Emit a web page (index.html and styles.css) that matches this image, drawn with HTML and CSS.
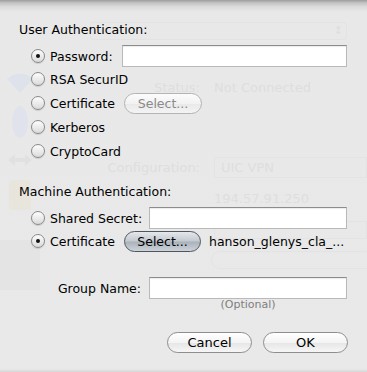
FILE: index.html
```html
<!DOCTYPE html>
<html lang="en">
<head>
  <meta charset="UTF-8" />
  <title>Authentication Settings</title>
  <link rel="stylesheet" href="styles.css">
</head>
<body>

  <!-- network pane behind the sheet, seen faded -->
  <div class="backdrop">
    <div class="ghost-side">
      <svg class="g-wifi" width="30" height="22" viewBox="0 0 30 22">
        <path d="M15 21 L2 7 A19 19 0 0 1 28 7 Z" fill="#dde2eb"/>
      </svg>
      <div class="g-bt"></div>
      <svg class="g-arrows" width="30" height="20" viewBox="0 0 30 20">
        <path d="M3 10 L10 4 L10 8 L20 8 L20 4 L27 10 L20 16 L20 12 L10 12 L10 16 Z" fill="#e1e1e1"/>
      </svg>
      <div class="g-lock"></div>
      <div class="g-vpn"></div>
    </div>
    <div class="ghost-main">
      <div class="g-popup"><span class="g-updown">&#8597;</span></div>
      <div class="g-row g-status"><span class="g-label">Status:</span><span>Not Connected</span></div>
      <div class="g-row g-config"><span class="g-label">Configuration:</span><span class="g-field">UIC VPN</span></div>
      <div class="g-row g-server"><span class="g-label"></span><span>194.57.91.250</span></div>
      <div class="g-row g-account"><span class="g-label"></span><span class="g-field"></span></div>
      <div class="g-authbtn"></div>
    </div>
  </div>

  <div class="sheet">
    <div class="title">User Authentication:</div>

    <div class="options">
      <div class="row first">
        <label class="choice w-pass"><span class="radio on"></span>Password:</label>
        <input class="field" type="password">
      </div>
      <div class="row">
        <label class="choice"><span class="radio"></span>RSA SecurID</label>
      </div>
      <div class="row">
        <label class="choice w-cert"><span class="radio"></span>Certificate</label>
        <button class="pill select disabled">Select...</button>
      </div>
      <div class="row">
        <label class="choice"><span class="radio"></span>Kerberos</label>
      </div>
      <div class="row">
        <label class="choice"><span class="radio"></span>CryptoCard</label>
      </div>
    </div>

    <div class="title second">Machine Authentication:</div>

    <div class="options">
      <div class="row first">
        <label class="choice w-secret"><span class="radio"></span>Shared Secret:</label>
        <input class="field" type="password">
      </div>
      <div class="row">
        <label class="choice w-cert"><span class="radio on"></span>Certificate</label>
        <button class="pill select active">Select...</button>
        <span class="certname">hanson_glenys_cla_...</span>
      </div>
    </div>

    <div class="group">
      <label class="group-label">Group Name:</label>
      <input class="field" type="text">
    </div>
    <div class="hint">(Optional)</div>

    <div class="actions">
      <button class="pill action">Cancel</button>
      <button class="pill action">OK</button>
    </div>
  </div>

</body>
</html>
```

FILE: styles.css
```css
* { margin: 0; padding: 0; box-sizing: border-box; }

body {
  width: 367px;
  height: 372px;
  overflow: hidden;
  position: relative;
  font-family: "Lucida Grande", "DejaVu Sans", sans-serif;
  font-size: 12.5px;
  color: #000;
  background: linear-gradient(to bottom, #9c9c9c 0, #c4c4c4 3px, #dcdcdc 7px, #e8e8e8 12px, #e9e9e9 369px, #d6d6d6 372px);
}

/* faded window behind */
.backdrop {
  position: absolute;
  inset: 0;
  display: flex;
  color: #dedede;
  font-size: 13px;
}

.ghost-side {
  width: 40px;
  display: flex;
  flex-direction: column;
  align-items: center;
  padding-top: 72px;
}

.g-bt {
  width: 16px;
  height: 32px;
  margin-top: 12px;
  border-radius: 50%;
  background: #e0e3ec;
}

.g-arrows { margin-top: 12px; }

.g-lock {
  width: 22px;
  height: 30px;
  margin-top: 10px;
  border-radius: 4px;
  background: #e8e6dc;
}

.g-vpn {
  width: 40px;
  height: 50px;
  margin-top: 30px;
  background: #e4e4e4;
}

.ghost-main {
  flex-grow: 1;
  padding-top: 22px;
}

.g-popup {
  margin-left: 50px;
  width: 257px;
  height: 18px;
  border: 1px solid #e3e3e3;
  border-radius: 3px;
  text-align: right;
  padding-right: 3px;
  font-size: 11px;
  line-height: 16px;
}

.g-row {
  display: flex;
  align-items: center;
  height: 14px;
}

.g-label {
  width: 160px;
  text-align: right;
  margin-right: 14px;
}

.g-status { margin-top: 40px; }
.g-config { margin-top: 63px; height: 21px; }
.g-server { margin-top: 13px; }
.g-account { margin-top: 16px; height: 18px; }

.g-field {
  flex-grow: 1;
  height: 100%;
  border: 1px solid #e3e3e3;
  padding-left: 6px;
  line-height: 19px;
}

.g-authbtn {
  margin: 12px 0 0 171px;
  height: 18px;
  border: 1px solid #e3e3e3;
  border-right: none;
  border-radius: 9px 0 0 9px;
}

/* the sheet */
.sheet {
  position: absolute;
  inset: 0;
  padding: 22px 20px 0 19px;
}

.title {
  height: 16px;
  line-height: 16px;
}

.title.second { margin-top: 21px; }

.options { margin-top: 7px; }

.row {
  display: flex;
  align-items: center;
  height: 24px;
}

.row.first { height: 22px; }

.choice {
  display: flex;
  align-items: center;
  gap: 5px;
  padding-left: 12px;
  white-space: nowrap;
}

.w-pass { width: 103px; }
.w-cert { width: 105px; }
.w-secret { width: 130px; }

.radio {
  width: 14px;
  height: 14px;
  border-radius: 50%;
  border: 1px solid #8a8a8a;
  background: linear-gradient(to bottom, #fdfdfd 0%, #ececec 50%, #dadada 100%);
  box-shadow: 0 1px 1px rgba(0, 0, 0, 0.12);
  display: flex;
  align-items: center;
  justify-content: center;
}

.radio.on::after {
  content: "";
  width: 4px;
  height: 4px;
  border-radius: 50%;
  background: #111;
}

.field {
  flex-grow: 1;
  height: 22px;
  background: #fff;
  border: 1px solid #b9b9b9;
  border-top-color: #8c8c8c;
  box-shadow: inset 0 1px 1px rgba(0, 0, 0, 0.08);
  outline: none;
}

.pill {
  font-family: inherit;
  font-size: 12.5px;
  height: 21px;
  border-radius: 11px;
  border: 1px solid #8e8e8e;
  background: linear-gradient(to bottom, #ffffff 0%, #f4f4f4 50%, #e6e6e6 52%, #f6f6f6 100%);
  color: #000;
}

.select { width: 78px; }

.select.disabled {
  color: #8a8a8a;
  border-color: #b4b4b4;
  background: linear-gradient(to bottom, #fcfcfc 0%, #f2f2f2 50%, #e9e9e9 52%, #f4f4f4 100%);
}

.select.active {
  width: 77px;
  border-color: #50565d;
  background: linear-gradient(to bottom, #e5e8ec 0%, #c3c9d0 48%, #a9b1ba 52%, #cdd3d9 100%);
}

.certname {
  margin-left: 8px;
  white-space: nowrap;
}

.group {
  display: flex;
  align-items: center;
  height: 22px;
  margin-top: 24px;
}

.group-label {
  width: 122px;
  text-align: right;
  margin-right: 8px;
}

.hint {
  padding-left: 130px;
  text-align: center;
  font-size: 11px;
  line-height: 12px;
  color: #7e7e7e;
}

.actions {
  display: flex;
  justify-content: flex-end;
  gap: 11px;
  margin-top: 21px;
  margin-right: -1px;
}

.action {
  width: 85px;
  font-size: 13px;
}
```
